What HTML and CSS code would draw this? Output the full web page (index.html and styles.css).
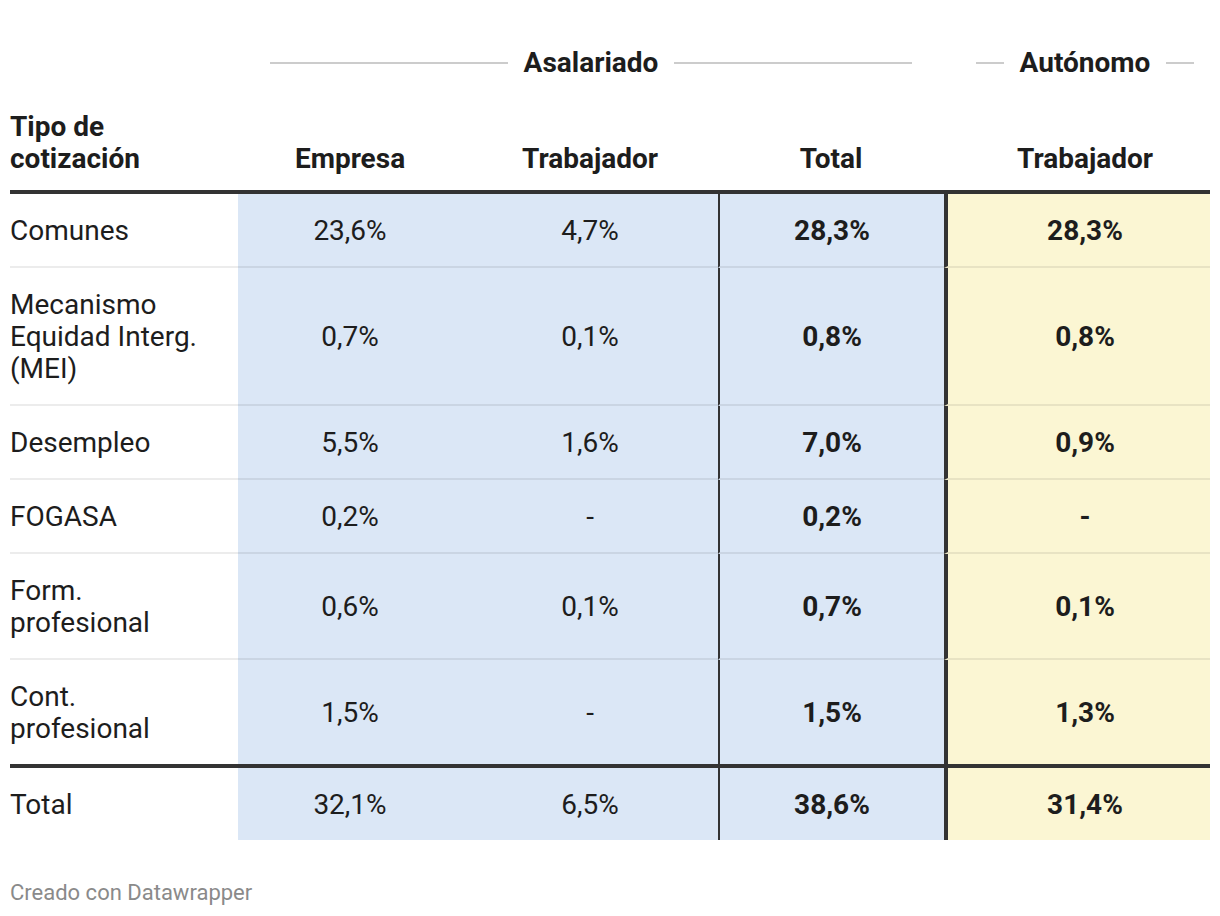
FILE: index.html
```html
<!DOCTYPE html>
<html lang="es">
<head>
<meta charset="utf-8">
<title>Tipo de cotización</title>
<link rel="stylesheet" href="styles.css">
</head>
<body>
<div class="chart">
  <div class="groups">
    <div class="g-spacer"></div>
    <div class="group g-asal"><span class="rule"></span><span class="g-label">Asalariado</span><span class="rule"></span></div>
    <div class="group g-auto"><span class="rule"></span><span class="g-label">Autónomo</span><span class="rule"></span></div>
  </div>
  <table class="tbl">
    <thead>
      <tr>
        <th class="c-label">Tipo de<br>cotización</th>
        <th class="c-emp">Empresa</th>
        <th class="c-trab">Trabajador</th>
        <th class="c-tot">Total</th>
        <th class="c-aut">Trabajador</th>
      </tr>
    </thead>
    <tbody>
      <tr>
        <td class="c-label">Comunes</td>
        <td class="blue">23,6%</td>
        <td class="blue">4,7%</td>
        <td class="blue tot">28,3%</td>
        <td class="yel aut">28,3%</td>
      </tr>
      <tr>
        <td class="c-label">Mecanismo<br>Equidad Interg.<br>(MEI)</td>
        <td class="blue">0,7%</td>
        <td class="blue">0,1%</td>
        <td class="blue tot">0,8%</td>
        <td class="yel aut">0,8%</td>
      </tr>
      <tr>
        <td class="c-label">Desempleo</td>
        <td class="blue">5,5%</td>
        <td class="blue">1,6%</td>
        <td class="blue tot">7,0%</td>
        <td class="yel aut">0,9%</td>
      </tr>
      <tr>
        <td class="c-label">FOGASA</td>
        <td class="blue">0,2%</td>
        <td class="blue">-</td>
        <td class="blue tot">0,2%</td>
        <td class="yel aut">-</td>
      </tr>
      <tr>
        <td class="c-label">Form.<br>profesional</td>
        <td class="blue">0,6%</td>
        <td class="blue">0,1%</td>
        <td class="blue tot">0,7%</td>
        <td class="yel aut">0,1%</td>
      </tr>
      <tr class="last">
        <td class="c-label">Cont.<br>profesional</td>
        <td class="blue">1,5%</td>
        <td class="blue">-</td>
        <td class="blue tot">1,5%</td>
        <td class="yel aut">1,3%</td>
      </tr>
      <tr class="sum">
        <td class="c-label">Total</td>
        <td class="blue">32,1%</td>
        <td class="blue">6,5%</td>
        <td class="blue tot">38,6%</td>
        <td class="yel aut">31,4%</td>
      </tr>
    </tbody>
  </table>
  <div class="footer">Creado con Datawrapper</div>
</div>
</body>
</html>
```

FILE: styles.css
```css
body {
  margin: 0;
  background: #ffffff;
  font-family: Roboto, "Noto Sans", Arial, sans-serif;
  color: #1d1d1d;
}

.chart {
  padding: 47px 10px 0;
}

.groups {
  display: flex;
  height: 32px;
  line-height: 32px;
  font-size: 28px;
  font-weight: 700;
}

.g-spacer {
  width: 228px;
  flex: none;
}

.group {
  display: flex;
  align-items: center;
  gap: 16px;
  box-sizing: border-box;
  flex: none;
}

.g-asal {
  width: 706px;
  padding: 0 32px 0 32px;
}

.g-auto {
  width: 266px;
  padding: 0 16px 0 32px;
}

.rule {
  flex: 1;
  height: 2px;
  margin-top: 0;
  background: #cccccc;
}

.tbl {
  width: 1200px;
  table-layout: fixed;
  border-collapse: separate;
  border-spacing: 0;
  font-size: 28px;
  line-height: 32px;
}

.tbl th {
  box-sizing: border-box;
  font-weight: 700;
  text-align: center;
  vertical-align: bottom;
  padding: 32px 16px 15px;
  border-bottom: 4px solid #333333;
}

.tbl th.c-label {
  width: 228px;
  text-align: left;
  padding-left: 0;
}

.tbl th.c-emp { width: 224px; }
.tbl th.c-trab { width: 256px; }
.tbl th.c-tot { width: 226px; }
.tbl th.c-aut {
  width: 266px;
  padding-left: 20px;
  padding-right: 4px;
}

.tbl td {
  box-sizing: border-box;
  text-align: center;
  vertical-align: middle;
  padding: 21px 16px 19px;
  border-bottom: 2px solid rgba(0, 0, 0, 0.075);
  font-weight: 400;
}

.tbl td.c-label {
  text-align: left;
  padding-left: 0;
}

.tbl td.blue { background: #dbe7f6; }
.tbl td.yel { background: #fbf6d3; }

.tbl td.tot {
  border-left: 2px solid #333333;
  font-weight: 700;
}

.tbl td.aut {
  border-left: 4px solid #333333;
  padding-left: 16px;
  padding-right: 4px;
  font-weight: 700;
}

.tbl tr.last td {
  border-bottom: 4px solid #333333;
}

.tbl tr.sum td {
  border-bottom: none;
}

.footer {
  padding-top: 40px;
  font-size: 22px;
  line-height: 26px;
  color: #8a8a8a;
}
```
